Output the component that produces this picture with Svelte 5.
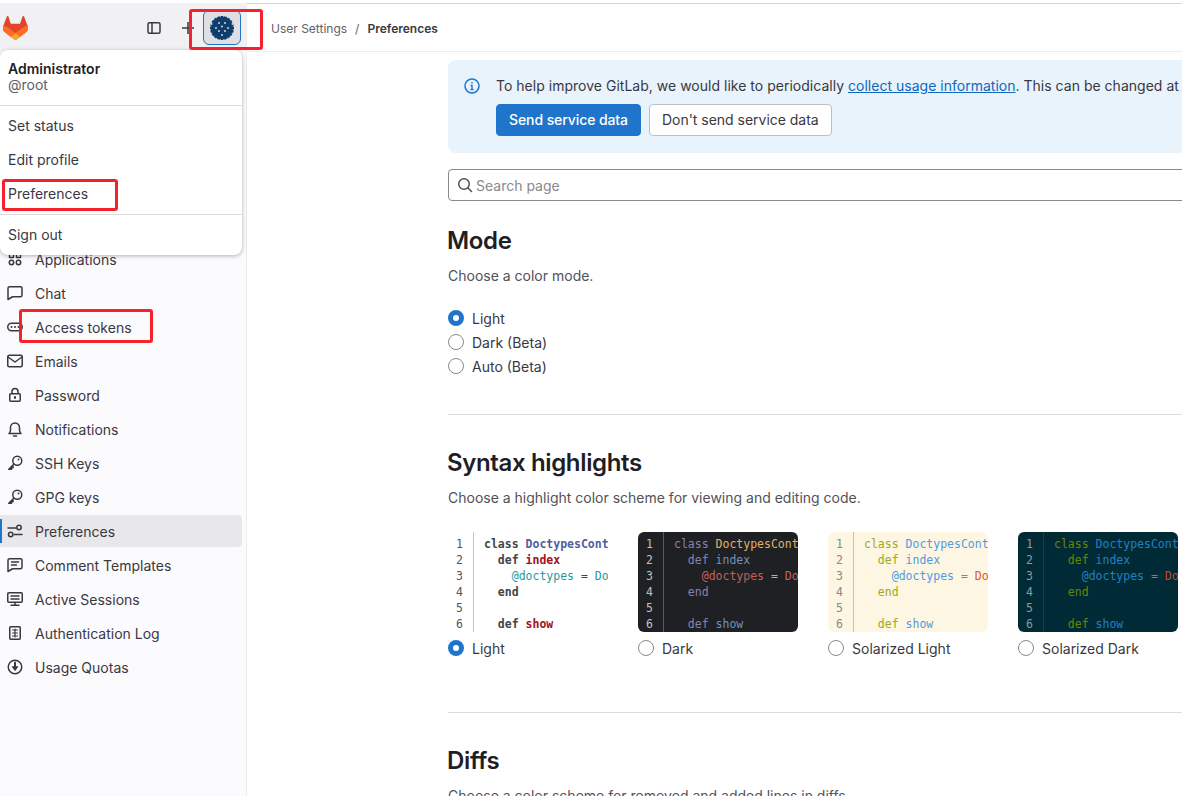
<script>
  const navItems = [
    { label: "Profile", icon: "profile" },
    { label: "Account", icon: "account" },
    { label: "Applications", icon: "applications" },
    { label: "Chat", icon: "chat" },
    { label: "Access tokens", icon: "token" },
    { label: "Emails", icon: "mail" },
    { label: "Password", icon: "lock" },
    { label: "Notifications", icon: "bell" },
    { label: "SSH Keys", icon: "key" },
    { label: "GPG keys", icon: "key" },
    { label: "Preferences", icon: "prefs", active: true },
    { label: "Comment Templates", icon: "comment" },
    { label: "Active Sessions", icon: "monitor" },
    { label: "Authentication Log", icon: "log" },
    { label: "Usage Quotas", icon: "quota" }
  ];

  const themes = [
    { id: "white", name: "Light", checked: true },
    { id: "dark", name: "Dark" },
    { id: "sol-light", name: "Solarized Light" },
    { id: "sol-dark", name: "Solarized Dark" }
  ];

  // white dots on the avatar
  const dots = [
    [9, 7], [15, 7], [12, 10.5], [6, 12], [18, 12],
    [9, 15], [15, 15], [12, 19], [1.5, 8], [22.5, 8]
  ];
  const spikes = Array.from({ length: 20 }, (_, i) => i * 18);
</script>

<div class="page">
  <aside class="sidebar">
    <div class="side-top">
      <svg class="logo" width="25" height="24" viewBox="0 0 25 24">
        <path d="m24.507 9.5-.034-.09L21.082.562a.896.896 0 0 0-1.694.091l-2.29 7.01H7.825L5.535.653a.898.898 0 0 0-1.694-.09L.451 9.411.416 9.5a6.297 6.297 0 0 0 2.09 7.278l.012.01.03.022 5.16 3.867 2.56 1.935 1.554 1.176a1.051 1.051 0 0 0 1.268 0l1.555-1.176 2.56-1.935 5.197-3.89.014-.01A6.297 6.297 0 0 0 24.507 9.5Z" fill="#E24329"/>
        <path d="m24.507 9.5-.034-.09a11.44 11.44 0 0 0-4.56 2.051l-7.447 5.632 4.742 3.584 5.197-3.89.014-.01A6.297 6.297 0 0 0 24.507 9.5Z" fill="#FC6D26"/>
        <path d="m7.707 20.677 2.56 1.935 1.555 1.176a1.051 1.051 0 0 0 1.268 0l1.555-1.176 2.56-1.935-4.743-3.584-4.755 3.584Z" fill="#FCA326"/>
        <path d="M5.01 11.461a11.43 11.43 0 0 0-4.56-2.05L.416 9.5a6.297 6.297 0 0 0 2.09 7.278l.012.01.03.022 5.16 3.867 4.745-3.584-7.444-5.632Z" fill="#FC6D26"/>
      </svg>
      <div class="top-actions">
        <svg class="ico" width="16" height="16" viewBox="0 0 16 16" fill="none" stroke="#3a383f" stroke-width="1.5">
          <rect x="2" y="2.75" width="12" height="10.5" rx="1.5"/>
          <path d="M6 2.75v10.5"/>
        </svg>
        <svg class="plus" width="16" height="16" viewBox="0 0 16 16" fill="none" stroke="#3a383f" stroke-width="1.5">
          <path d="M8 2v12M2 8h12"/>
        </svg>
        <div class="avatar-btn">
          <svg width="24" height="24" viewBox="0 0 24 24">
            {#each spikes as a}
              <rect x="10.6" y="0" width="2.8" height="3" fill="#0f3d6b" transform="rotate({a} 12 12)"/>
            {/each}
            <circle cx="12" cy="12" r="10.9" fill="#0f3d6b"/>
            {#each dots as d}
              <rect x={d[0] - 0.8} y={d[1] - 0.8} width="1.6" height="1.6" fill="#e8eef5"/>
            {/each}
          </svg>
        </div>
      </div>
    </div>

    <nav class="nav">
      {#each navItems as item}
        <div class="nav-item" class:active={item.active}>
          <svg class="ico" width="16" height="16" viewBox="0 0 16 16" fill="none" stroke="#3a383f" stroke-width="1.5" stroke-linecap="round" stroke-linejoin="round">
            {#if item.icon === "applications"}
              <circle cx="4.5" cy="11.5" r="2.2"/><circle cx="11.5" cy="11.5" r="2.2"/>
              <rect x="2.5" y="2.5" width="4" height="4"/><rect x="9.5" y="2.5" width="4" height="4"/>
            {:else if item.icon === "chat"}
              <path d="M2.5 1.75h11a1.5 1.5 0 0 1 1.5 1.5v7a1.5 1.5 0 0 1-1.5 1.5H5.5L1 14.5V3.25a1.5 1.5 0 0 1 1.5-1.5Z"/>
            {:else if item.icon === "token"}
              <rect x="0.75" y="4.25" width="14.5" height="7.5" rx="3.75"/>
              <path d="M4.5 8h.01M8 8h.01M11.5 8h.01" stroke-width="2"/>
            {:else if item.icon === "mail"}
              <rect x="0.75" y="2.25" width="14.5" height="11.5" rx="1.5"/>
              <path d="m1 4 7 5 7-5"/>
            {:else if item.icon === "lock"}
              <rect x="2.75" y="6.75" width="10.5" height="7.5" rx="1"/>
              <path d="M5 6.5V4.5a3 3 0 0 1 6 0v2"/>
              <path d="M8 10v1" stroke-width="2"/>
            {:else if item.icon === "bell"}
              <path d="M2 12.5h12c-1.2-1-1.5-2-1.5-3.5V6.5a4.5 4.5 0 0 0-9 0V9c0 1.5-.3 2.5-1.5 3.5Z"/>
              <path d="M6.5 15h3"/>
            {:else if item.icon === "key"}
              <circle cx="10.25" cy="5.75" r="4.5"/>
              <path d="M7 9 1.75 14.25H4.5v-1.5H6V11.2"/>
              <path d="M11.5 4.5h.01" stroke-width="1.8"/>
            {:else if item.icon === "prefs"}
              <path d="M1 5h8M7 11.5h8"/>
              <circle cx="12" cy="4.5" r="2.2"/>
              <circle cx="3.7" cy="11.5" r="2.2"/>
            {:else if item.icon === "comment"}
              <path d="M2.5 1.75h11a1.5 1.5 0 0 1 1.5 1.5v7a1.5 1.5 0 0 1-1.5 1.5H5.5L1 14.5V3.25a1.5 1.5 0 0 1 1.5-1.5Z"/>
              <path d="M4.5 5h7M4.5 8h5"/>
            {:else if item.icon === "monitor"}
              <rect x="0.75" y="1.75" width="14.5" height="9.5" rx="1"/>
              <path d="M4 5h8M4 8h8M8 11.5V14M4 14.25h8"/>
            {:else if item.icon === "log"}
              <rect x="2.75" y="1.75" width="10.5" height="12.5" rx="1"/>
              <path d="M5.5 5h5M5.5 8h5M5.5 11h5M8 4v8" stroke-width="1.2"/>
            {:else if item.icon === "quota"}
              <circle cx="8" cy="8" r="6.75"/>
              <path d="M8 3.5v5" stroke-width="2"/>
              <path d="M5.5 8 8 11.5 10.5 8Z" fill="#3a383f" stroke-width="1"/>
            {:else}
              <circle cx="8" cy="8" r="6"/>
            {/if}
          </svg>
          <span>{item.label}</span>
        </div>
      {/each}
    </nav>

    <div class="user-menu">
      <div class="user-head">
        <strong>Administrator</strong>
        <span>@root</span>
      </div>
      <div class="menu-group">
        <div class="menu-item">Set status</div>
        <div class="menu-item">Edit profile</div>
        <div class="menu-item">Preferences</div>
      </div>
      <div class="menu-group last">
        <div class="menu-item">Sign out</div>
      </div>
    </div>
  </aside>

  <main class="main">
    <header class="crumbs">
      <span>User Settings</span>
      <span class="sep">/</span>
      <b>Preferences</b>
    </header>

    <div class="content">
      <div class="banner">
        <svg class="info" width="16" height="16" viewBox="0 0 16 16" fill="none" stroke="#1f75cb" stroke-width="1.5">
          <circle cx="8" cy="8" r="7"/>
          <path d="M6.5 7.5H8v4M6.5 11.5h3" stroke-width="1.3"/>
          <path d="M8 4.2v1.3" stroke-width="1.7"/>
        </svg>
        <div class="banner-body">
          <p>To help improve GitLab, we would like to periodically <a href="#usage">collect usage information</a>. This can be changed at any time in your settings.</p>
          <div class="btns">
            <button class="btn primary">Send service data</button>
            <button class="btn">Don't send service data</button>
          </div>
        </div>
      </div>

      <div class="search">
        <svg width="16" height="16" viewBox="0 0 16 16" fill="none" stroke="#535158" stroke-width="1.5">
          <circle cx="7" cy="7" r="5.25"/>
          <path d="m11 11 3.5 3.5" stroke-linecap="round"/>
        </svg>
        <span>Search page</span>
      </div>

      <section class="sect first">
        <h2>Mode</h2>
        <p class="desc">Choose a color mode.</p>
        <div class="radios">
          <label class="radio"><i class="dot on"></i>Light</label>
          <label class="radio"><i class="dot"></i>Dark (Beta)</label>
          <label class="radio"><i class="dot"></i>Auto (Beta)</label>
        </div>
      </section>

      <section class="sect">
        <h2>Syntax highlights</h2>
        <p class="desc">Choose a highlight color scheme for viewing and editing code.</p>
        <div class="themes">
          {#each themes as t}
            <div class="theme {t.id}">
              <div class="preview">
                <pre class="nums">1
2
3
4
5
6</pre>
                <pre class="code"><span class="k">class</span> <span class="c">DoctypesController</span>
  <span class="k">def</span> <span class="f">index</span>
    <span class="v">@doctypes</span> <span class="o">=</span> <span class="t">Doctype.all</span>
  <span class="k">end</span>

  <span class="k">def</span> <span class="f">show</span></pre>
              </div>
              <label class="radio"><i class="dot" class:on={t.checked}></i>{t.name}</label>
            </div>
          {/each}
        </div>
      </section>

      <section class="sect">
        <h2>Diffs</h2>
        <p class="desc">Choose a color scheme for removed and added lines in diffs.</p>
      </section>
    </div>
  </main>

  <!-- red callouts drawn over the screenshot -->
  <div class="mark m1"></div>
  <div class="mark m2"></div>
  <div class="mark m3"></div>
</div>

<style>
  :global(body) {
    margin: 0;
    overflow: hidden;
    background: #fff;
  }

  .page {
    position: relative;
    display: flex;
    width: 1182px;
    height: 796px;
    overflow: hidden;
    box-sizing: border-box;
    padding-top: 3px;
    font-family: Inter, "Liberation Sans", sans-serif;
    font-size: 14px;
    color: #3a383f;
    background: #fff;
  }

  .page::before {
    content: "";
    position: absolute;
    top: 3px;
    left: 0;
    right: 0;
    height: 1px;
    background: #d4d4d6;
  }

  .sidebar {
    position: relative;
    flex: 0 0 246px;
    background: #fbfafd;
    border-right: 1px solid #ececef;
  }

  .side-top {
    display: flex;
    align-items: center;
    justify-content: space-between;
    height: 47px;
    padding: 1px 5px 0 3px;
    background: #f1f1f3;
  }

  .logo {
    display: block;
  }

  .top-actions {
    display: flex;
    align-items: center;
  }

  .plus {
    margin: 0 7px 0 18px;
  }

  .avatar-btn {
    display: flex;
    align-items: center;
    justify-content: center;
    box-sizing: border-box;
    width: 38px;
    height: 35px;
    border: 1.5px solid #1f75cb;
    border-radius: 6px;
    background: #dfdfe3;
  }

  .nav {
    padding-top: 123px;
    display: flex;
    flex-direction: column;
  }

  .nav-item {
    position: relative;
    display: flex;
    align-items: center;
    gap: 12px;
    width: 242px;
    box-sizing: border-box;
    height: 34px;
    padding-left: 7px;
    border-radius: 0 4px 4px 0;
  }

  .nav-item.active {
    height: 32px;
    margin: 1px 0;
    background: #e8e8ea;
  }

  .nav-item.active::before {
    content: "";
    position: absolute;
    left: 0;
    top: 4px;
    bottom: 4px;
    width: 2px;
    background: #1f75cb;
  }

  .ico {
    flex: none;
  }

  .user-menu {
    position: absolute;
    top: 47px;
    left: 0;
    width: 242px;
    height: 205px;
    box-sizing: border-box;
    background: #fff;
    border-radius: 8px;
    box-shadow: 0 1px 4px rgba(0, 0, 0, 0.3);
    z-index: 2;
  }

  .user-menu::before {
    content: "";
    position: absolute;
    top: -3px;
    left: 218px;
    width: 6px;
    height: 6px;
    background: #fff;
    transform: rotate(45deg);
  }

  .user-head {
    display: flex;
    flex-direction: column;
    height: 56px;
    box-sizing: border-box;
    padding: 11px 8px 0;
    line-height: 16px;
    border-bottom: 1px solid #dcdcde;
  }

  .user-head strong {
    font-weight: 600;
    color: #1f1e24;
  }

  .user-head span {
    color: #626168;
  }

  .menu-group {
    padding: 3px 0;
    border-bottom: 1px solid #dcdcde;
  }

  .menu-group.last {
    border-bottom: none;
  }

  .menu-item {
    height: 34px;
    line-height: 34px;
    padding-left: 8px;
  }

  .main {
    flex: 1;
    min-width: 0;
    overflow: hidden;
  }

  .crumbs {
    display: flex;
    align-items: center;
    height: 48px;
    margin-top: 1px;
    padding: 1px 0 0 24px;
    box-sizing: border-box;
    border-bottom: 1px solid #ececef;
    font-size: 12px;
    color: #626168;
  }

  .crumbs .sep {
    margin: 0 8px;
  }

  .crumbs b {
    font-weight: 600;
    color: #3a383f;
  }

  .content {
    width: 1100px;
    padding: 8px 0 0 201px;
  }

  .banner {
    display: flex;
    gap: 16px;
    height: 93px;
    box-sizing: border-box;
    padding: 18px 16px 0;
    background: #e9f3fc;
    border-radius: 8px;
  }

  .info {
    flex: none;
  }

  .banner-body p {
    margin: -2px 0 8px;
    line-height: 20px;
    letter-spacing: 0.015px;
    white-space: nowrap;
  }

  .banner-body a {
    color: #1068bf;
    text-decoration: underline;
  }

  .btns {
    display: flex;
    gap: 8px;
  }

  .btn {
    height: 32px;
    padding: 0 12px 1px;
    font: inherit;
    letter-spacing: -0.02px;
    color: #3a383f;
    background: #fff;
    border: 1px solid #bfbfc3;
    border-radius: 4px;
  }

  .btn.primary {
    color: #fff;
    font-weight: 500;
    letter-spacing: -0.09px;
    background: #1f75cb;
    border-color: #1f75cb;
  }

  .search {
    display: flex;
    align-items: center;
    gap: 3px;
    height: 32px;
    margin-top: 16px;
    padding-left: 8px;
    box-sizing: border-box;
    color: #89888d;
    border: 1px solid #89888d;
    border-radius: 4px;
  }

  .sect {
    margin-top: 33px;
    padding-bottom: 36px;
    border-bottom: 1px solid #dcdcde;
  }

  .sect.first {
    margin-top: 25px;
  }

  .sect:last-child {
    border-bottom: none;
  }

  h2 {
    margin: 0 0 0 -1px;
    font-size: 24px;
    line-height: 30px;
    font-weight: 600;
    letter-spacing: -0.36px;
    color: #1f1e24;
  }

  .desc {
    margin: 10px 0 0;
    line-height: 20px;
    color: #535158;
  }

  .radios {
    margin-top: 20px;
  }

  .radio {
    display: flex;
    align-items: center;
    gap: 8px;
    height: 24px;
  }

  .dot {
    flex: none;
    width: 16px;
    height: 16px;
    box-sizing: border-box;
    border: 1px solid #89888d;
    border-radius: 50%;
    background: #fff;
  }

  .dot.on {
    border: 5px solid #1f75cb;
  }

  .themes {
    display: flex;
    gap: 30px;
    margin-top: 24px;
    padding-bottom: 16px;
  }

  .theme {
    width: 160px;
  }

  .preview {
    display: flex;
    height: 100px;
    margin-bottom: 4px;
    overflow: hidden;
    border-radius: 6px;
  }

  pre {
    margin: 0;
    padding-top: 4px;
    font-family: "DejaVu Sans Mono", "Liberation Mono", monospace;
    font-size: 11.5px;
    line-height: 16px;
  }

  .nums {
    flex: none;
    width: 26px;
    box-sizing: border-box;
    padding-left: 8px;
    border-right: 1px solid;
  }

  .code {
    flex: 1;
    min-width: 0;
    padding-left: 10px;
    overflow: hidden;
  }

  .white .preview { background: #fff; }
  .white .nums { color: #555; border-color: #c5c5c5; }
  .white .k { color: #444; font-weight: 700; }
  .white .c { color: #50609a; font-weight: 700; }
  .white .f { color: #a50f1e; font-weight: 700; }
  .white .v { color: #2a9a9a; }
  .white .o { color: #444; }
  .white .t { color: #2a9a9a; }

  .dark .preview { background: #1f2023; }
  .dark .nums { color: #c1c1c1; border-color: #5a5a5e; }
  .dark .k { color: #8a80b0; }
  .dark .c { color: #e0b268; }
  .dark .f { color: #6f92bd; }
  .dark .v { color: #c0605f; }
  .dark .o { color: #b5bd68; }
  .dark .t { color: #c0605f; }

  .sol-light .preview { background: #fdf6e3; }
  .sol-light .nums { color: #7f8c8d; border-color: #bcc3c6; }
  .sol-light .k { color: #a2a620; }
  .sol-light .c { color: #4f9ae0; }
  .sol-light .f { color: #4f9ae0; }
  .sol-light .v { color: #4f9ae0; }
  .sol-light .o { color: #859900; }
  .sol-light .t { color: #dc5a26; }

  .sol-dark .preview { background: #002b36; }
  .sol-dark .nums { color: #8d9b9b; border-color: #11414d; }
  .sol-dark .k { color: #6b8500; }
  .sol-dark .c { color: #2080c4; }
  .sol-dark .f { color: #2080c4; }
  .sol-dark .v { color: #2080c4; }
  .sol-dark .o { color: #859900; }
  .sol-dark .t { color: #c8481e; }

  .mark {
    position: absolute;
    box-sizing: border-box;
    border: 3px solid #f5222d;
    border-radius: 3px;
    z-index: 5;
  }

  .m1 { left: 189px; top: 9px; width: 74px; height: 41px; }
  .m2 { left: 2px; top: 179px; width: 116px; height: 32px; }
  .m3 { left: 19px; top: 309px; width: 134px; height: 34px; }
</style>
